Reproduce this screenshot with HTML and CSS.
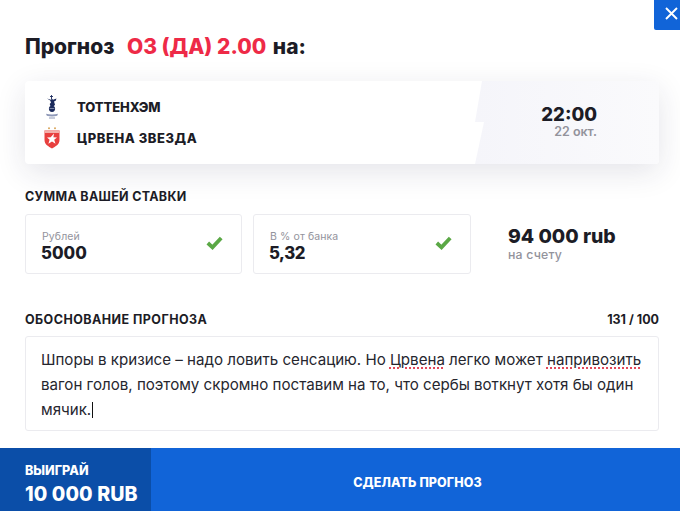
FILE: index.html
```html
<!DOCTYPE html>
<html lang="ru">
<head>
<meta charset="utf-8">
<title>Прогноз</title>
<link rel="stylesheet" href="styles.css">
</head>
<body>
<div class="modal">
  <button class="close" aria-label="Закрыть">
    <svg width="13" height="13" viewBox="0 0 13 13"><path d="M1 1l11 11M12 1L1 12" stroke="#fff" stroke-width="1.900" fill="none"/></svg>
  </button>
  <div class="content">
    <h1 class="title">Прогноз <span class="accent">ОЗ (ДА) 2.00</span> на:</h1>
    <section class="match">
      <div class="teams">
        <div class="team">
          <svg class="logo" width="14" height="24" viewBox="0 0 14 24">
            <path d="M6.500 0v4M5 1.500h3" stroke="#1b2a5c" stroke-width=".9" fill="none"/>
            <path d="M2 3.500l3.800 1.300L7 3.800l1 1 3.500-1.300-.8 2.200-1.700.9 1 3.100-1.300 1.500H5.500L4.700 9l1.300-1.600-.8-1.900z" fill="#1b2a5c"/>
            <circle cx="7" cy="13.800" r="3.100" fill="#1b2a5c"/>
            <path d="M4.600 13.500h4.800" stroke="#dfe3ee" stroke-width=".5"/>
            <path d="M1 18.800c3.500 1 8.500 1 12 0l-.8 2c-3.200.8-7.200.8-10.400 0z" fill="#8f99b8"/>
            <path d="M4 23h6" stroke="#8f99b8" stroke-width="1"/>
          </svg>
          <span class="team-name team-name-tight">ТОТТЕНХЭМ</span>
        </div>
        <div class="team">
          <svg class="logo" width="16" height="22" viewBox="0 0 16 22">
            <circle cx="5" cy="1.200" r="1" fill="#d9a55b"/>
            <circle cx="11" cy="1.200" r="1" fill="#d9a55b"/>
            <path d="M.5 3.500h15V13c0 4.500-4 6.500-7.500 8.500C4.500 19.500.5 17.500.5 13z" fill="#e8403f"/>
            <path d="M.5 3.500h15v2.500H.5z" fill="#f3b0aa"/>
            <path d="M10 6.500l-.6 3.700 3.600.2-2.800 2.300 1.300 4-3.500-2.300-3.600 2.300 1.200-4L3 10.400l3.700-.2z" fill="#fff"/>
          </svg>
          <span class="team-name">ЦРВЕНА ЗВЕЗДА</span>
        </div>
      </div>
      <div class="kickoff">
        <div class="time">22:00</div>
        <div class="date">22 окт.</div>
      </div>
    </section>

    <h2 class="label">СУММА ВАШЕЙ СТАВКИ</h2>
    <div class="stake">
      <div class="field">
        <div>
          <div class="field-label">Рублей</div>
          <div class="field-value">5000</div>
        </div>
        <svg class="check" width="17" height="14" viewBox="0 0 17 14"><path d="M1.800 7l4.700 4.300L15.200 2" stroke="#5aa845" stroke-width="3.800" fill="none"/></svg>
      </div>
      <div class="field">
        <div>
          <div class="field-label">В % от банка</div>
          <div class="field-value field-value-narrow">5,32</div>
        </div>
        <svg class="check" width="17" height="14" viewBox="0 0 17 14"><path d="M1.800 7l4.700 4.300L15.200 2" stroke="#5aa845" stroke-width="3.800" fill="none"/></svg>
      </div>
      <div class="balance">
        <div class="balance-value">94 000 rub</div>
        <div class="balance-label">на счету</div>
      </div>
    </div>

    <div class="reason-head">
      <h2 class="label label-wide">ОБОСНОВАНИЕ ПРОГНОЗА</h2>
      <span class="counter">131 / 100</span>
    </div>
    <div class="reason">Шпоры в кризисе – надо ловить сенсацию. Но <span class="typo">Црвена</span> легко может <span class="typo">напривозить</span> вагон голов, поэтому скромно поставим на то, что сербы воткнут хотя бы один мячик.<span class="caret"></span></div>
  </div>
  <footer class="footer">
    <div class="win">
      <div class="win-label">ВЫИГРАЙ</div>
      <div class="win-value">10 000 RUB</div>
    </div>
    <button class="submit">СДЕЛАТЬ ПРОГНОЗ</button>
  </footer>
</div>
</body>
</html>
```

FILE: styles.css
```css
* { box-sizing: border-box; }
html, body { margin: 0; padding: 0; }
body { background: #fff; color: #1c1c26; font-family: Inter, "Liberation Sans", sans-serif; }
.modal { position: relative; width: 680px; height: 511px; display: flex; flex-direction: column; overflow: hidden; }
.close { position: absolute; top: 0; right: 0; width: 26px; height: 30px; padding: 0 0 4px 8px; border: 0; border-radius: 0 0 0 2px; background: #1164d8; display: flex; align-items: center; justify-content: center; }
.content { flex: 1; padding: 34px 21px 0 25px; }
.title { margin: 0; font-size: 21px; line-height: 26px; font-weight: 800; letter-spacing: 0; }
.accent { color: #ee2a47; margin-left: 8px; margin-right: 2px; }
.match { display: flex; justify-content: space-between; height: 83px; margin-top: 21px; border-radius: 4px; background: #fff; box-shadow: 0 8px 30px rgba(30, 35, 70, .12); overflow: hidden; }
.teams { display: flex; flex-direction: column; gap: 7px; padding-top: 14px; }
.team { display: flex; align-items: center; height: 24px; }
.logo { flex: none; margin-left: 20px; margin-right: 18px; }
.team:nth-child(2) .logo { margin-left: 19px; margin-right: 17px; }
.team-name { font-size: 13px; font-weight: 800; letter-spacing: .55px; }
.team-name-tight { letter-spacing: -.1px; }
.kickoff { width: 184px; padding: 23px 62px 0 0; background: linear-gradient(90deg, #f5f5fa, #fafafc); text-align: right; clip-path: polygon(7px 0, 100% 0, 100% 100%, 0 100%, 9px 41px, 0 41px); }
.time { font-size: 18.500px; line-height: 20px; font-weight: 800; }
.date { font-size: 12.500px; line-height: 14px; margin-top: 1px; font-weight: 600; color: #93939c; }
.label { margin: 0; font-size: 12.500px; line-height: 16px; font-weight: 700; letter-spacing: .3px; }
.label-wide { letter-spacing: .45px; }
.match + .label { margin-top: 25px; }
.stake { display: flex; align-items: stretch; gap: 11px; margin-top: 9px; }
.field { display: flex; align-items: center; justify-content: space-between; width: 217px; height: 60px; padding: 4px 18px 0 15px; border: 1px solid #ebebef; border-radius: 3px; }
.field:nth-child(2) { width: 218px; }
.field-label { font-size: 10.500px; line-height: 13px; color: #93939c; letter-spacing: .1px; padding-left: 1px; }
.field-value { font-size: 16.800px; line-height: 20px; font-weight: 800; }
.field-value-narrow { letter-spacing: -.5px; }
.check { margin-top: -7px; }
.balance { margin-left: 26px; padding-top: 10px; }
.balance-value { font-size: 19.400px; line-height: 24px; font-weight: 800; }
.balance-label { font-size: 12.300px; line-height: 13px; font-weight: 500; color: #93939c; letter-spacing: .2px; }
.reason-head { display: flex; justify-content: space-between; align-items: center; margin-top: 38px; }
.counter { font-size: 12.500px; line-height: 16px; font-weight: 700; }
.reason { height: 95px; margin-top: 8px; padding: 10px 15px; border: 1px solid #ebebef; border-radius: 3px; font-size: 15.120px; line-height: 25px; color: #26262e; }
.typo { text-decoration: underline dotted #e2485a 2px; text-underline-offset: 2px; }
.caret { display: inline-block; width: 1px; height: 16px; margin-left: 1px; vertical-align: -3px; background: #111; }
.footer { display: flex; height: 63px; flex: none; color: #fff; background: #1164d8; }
.win { width: 151px; padding: 14px 0 0 25px; background: #0b4ea8; }
.win-label { font-size: 12.600px; line-height: 16px; font-weight: 800; position: relative; top: 1px; }
.win-value { margin-top: 5px; font-size: 19.600px; line-height: 22px; font-weight: 800; letter-spacing: .1px; white-space: nowrap; }
.submit { flex: 1; padding: 5px 0 0 4px; border: 0; background: transparent; color: #fff; font-family: inherit; font-size: 12.500px; font-weight: 800; letter-spacing: .1px; }
```
